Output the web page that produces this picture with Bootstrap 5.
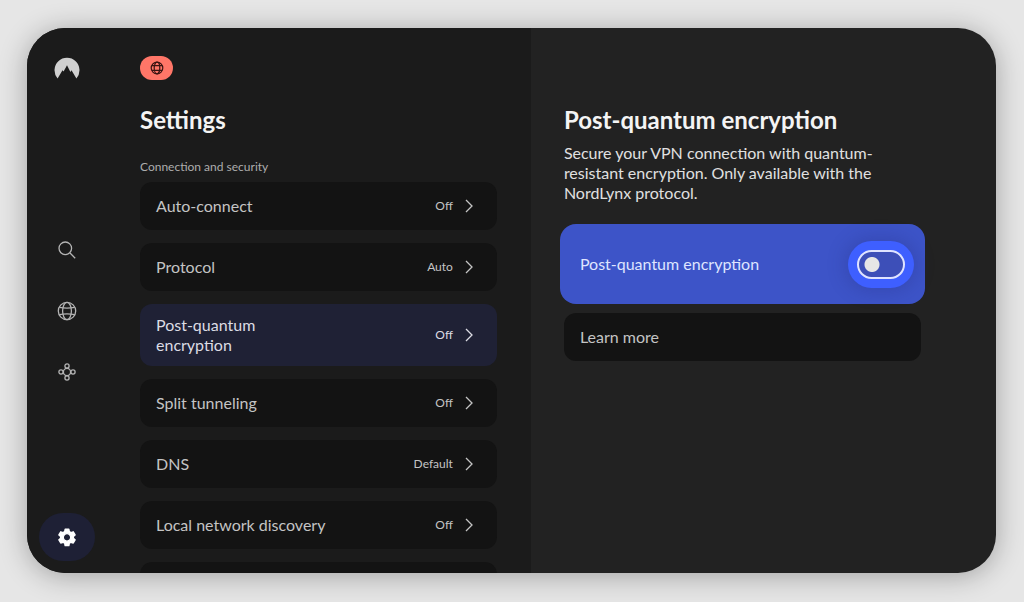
<!DOCTYPE html>
<html lang="en" data-bs-theme="dark">
<head>
<meta charset="utf-8">
<meta name="viewport" content="width=device-width, initial-scale=1">
<title>Settings</title>
<link href="https://cdn.jsdelivr.net/npm/bootstrap@5.3.0/dist/css/bootstrap.min.css" rel="stylesheet">
<style>
  body { background: #e6e6e6; font-family: Lato, sans-serif; color: #c4c4c4; font-size: 16px; line-height: 20px; }
  .stage { padding: 28px 28px 29px 27px; }
  .screen { background: #222; border-radius: 38px; box-shadow: 0 3px 28px rgba(0, 0, 0, .3); }
  .pane-left { background: #1b1b1b; flex: 0 0 52%; }
  .rail { width: 80px; flex: none; padding: 28px 0 12px; }
  .rail a { color: #b4b4b4; display: flex; align-items: center; justify-content: center; }
  .rail-links { gap: 37px; margin-top: 156px; }
  .rail-links a { height: 24px; width: 24px; }
  .rail a.rail-active { width: 56px; height: 48px; border-radius: 24px; background: #1e2035; color: #fff; }
  .settings-col { padding: 28px 34px 0 33px; min-width: 0; }
  .status-pill { width: 33px; height: 24px; border-radius: 12px; background: #ff7668; color: #3a1412; }
  .page-title { font-size: 24px; line-height: 32px; font-weight: 700; color: #f4f4f4; margin: 0; }
  .group-label { font-size: 12px; line-height: 16px; font-weight: 400; color: #adadad; margin: 23px 0 7px; }
  .tiles { gap: 13px; }
  .tile { background: #131313; color: #c4c4c4; border: 0; border-radius: 12px; padding: 0 20px 0 16px; min-height: 48px; flex: none; font-size: 16px; line-height: 20px; }
  .tile.current { background: #1f2135; color: #dcdce4; min-height: 62px; }
  .tile-name { max-width: 150px; }
  .tile-name-wide { max-width: none; }
  .tile-value { font-size: 12px; line-height: 16px; }
  .detail { padding: 76px 75px 0 33px; min-width: 0; }
  .detail-text { color: #e0e0e0; margin: 7px 0 21px; }
  .focus-tile { background: #3d54c8; color: #dfe5ff; border-radius: 16px; margin: 0 -4px 9px; min-height: 80px; padding: 0 20px; cursor: pointer; }
  .form-check-input.toggle { width: 48px; height: 29px; margin: 0; border: 2px solid #dfe3ff; border-radius: 15px; background: #3d4fb8 radial-gradient(circle at 13px 50%, #e6e6e6 7px, transparent 8px) no-repeat; box-shadow: 0 0 0 9px #3e5fff, 0 0 18px 12px rgba(35, 45, 130, .3); }
</style>
</head>
<body>
<div class="stage vh-100">
  <div class="screen d-flex h-100 overflow-hidden">
    <div class="pane-left d-flex h-100">
      <nav class="rail d-flex flex-column align-items-center" aria-label="Main">
        <a href="#" aria-label="Home"><svg width="26" height="26" viewBox="0 0 26 26"><path fill="#d0d0d0" d="M3.600 22.500A12.500 12.500 0 1 1 22.400 22.500L17.500 14.200l-1.100 1.700L13 9.200l-3.400 6.400-1.100-1.400Z"/></svg></a>
        <div class="rail-links d-flex flex-column">
          <a href="#" aria-label="Search"><svg width="20" height="20" viewBox="0 0 20 20" fill="none" stroke="currentColor" stroke-width="1.3"><circle cx="8.3" cy="8.3" r="6.3"/><path d="m13 13 5.2 5.2"/></svg></a>
          <a href="#" aria-label="Countries"><svg width="20" height="20" viewBox="0 0 20 20" fill="none" stroke="currentColor" stroke-width="1.3"><circle cx="10" cy="10" r="8.7"/><ellipse cx="10" cy="10" rx="4.4" ry="8.7"/><path d="M2.3 6.3q7.7 1.6 15.4 0M2.3 13.7q7.7-1.6 15.4 0"/></svg></a>
          <a href="#" aria-label="Meshnet"><svg width="18" height="18" viewBox="0 0 18 18" fill="none" stroke="currentColor" stroke-width="1.3"><circle cx="9" cy="9" r="3.6"/><circle cx="9" cy="3" r="2.1"/><circle cx="15" cy="9" r="2.1"/><circle cx="9" cy="15" r="2.1"/><circle cx="3" cy="9" r="2.1"/></svg></a>
        </div>
        <a class="rail-active mt-auto" href="#" aria-label="Settings" aria-current="page"><svg width="22" height="22" viewBox="0 0 24 24" fill="currentColor"><path fill-rule="evenodd" stroke="currentColor" stroke-linejoin="round" stroke-width="1.6" d="M10 3.6h4l.5 2.5 1.9 1.1 2.4-.8 2 3.4-1.9 1.7v1.9l1.9 1.7-2 3.4-2.4-.8-1.9 1.1-.5 2.5h-4l-.5-2.5-1.9-1.1-2.4.8-2-3.4 1.9-1.7v-1.9L3.2 9.8l2-3.4 2.4.8 1.9-1.1ZM12 8.3a4.1 4.1 0 1 0 0 8.2 4.1 4.1 0 0 0 0-8.2Z"/></svg></a>
      </nav>
      <main class="settings-col flex-grow-1">
        <div class="status-pill d-flex align-items-center justify-content-center mb-4"><svg width="14" height="14" viewBox="0 0 14 14" fill="none" stroke="currentColor" stroke-width="1.2"><circle cx="7" cy="7" r="5.8"/><ellipse cx="7" cy="7" rx="2.8" ry="5.8"/><path d="M1.8 4.7h10.4M1.8 9.3h10.4"/></svg></div>
        <h1 class="page-title">Settings</h1>
        <h2 class="group-label">Connection and security</h2>
        <div class="tiles d-flex flex-column">
          <button type="button" class="tile d-flex align-items-center text-start"><span class="tile-name">Auto-connect</span><span class="tile-value ms-auto me-2">Off</span><svg width="16" height="16" viewBox="0 0 16 16" fill="none" stroke="currentColor" stroke-width="1.3"><path d="m5 2 6 6-6 6"/></svg></button>
          <button type="button" class="tile d-flex align-items-center text-start"><span class="tile-name">Protocol</span><span class="tile-value ms-auto me-2">Auto</span><svg width="16" height="16" viewBox="0 0 16 16" fill="none" stroke="currentColor" stroke-width="1.3"><path d="m5 2 6 6-6 6"/></svg></button>
          <button type="button" class="tile current d-flex align-items-center text-start"><span class="tile-name">Post-quantum encryption</span><span class="tile-value ms-auto me-2">Off</span><svg width="16" height="16" viewBox="0 0 16 16" fill="none" stroke="currentColor" stroke-width="1.3"><path d="m5 2 6 6-6 6"/></svg></button>
          <button type="button" class="tile d-flex align-items-center text-start"><span class="tile-name">Split tunneling</span><span class="tile-value ms-auto me-2">Off</span><svg width="16" height="16" viewBox="0 0 16 16" fill="none" stroke="currentColor" stroke-width="1.3"><path d="m5 2 6 6-6 6"/></svg></button>
          <button type="button" class="tile d-flex align-items-center text-start"><span class="tile-name">DNS</span><span class="tile-value ms-auto me-2">Default</span><svg width="16" height="16" viewBox="0 0 16 16" fill="none" stroke="currentColor" stroke-width="1.3"><path d="m5 2 6 6-6 6"/></svg></button>
          <button type="button" class="tile d-flex align-items-center text-start"><span class="tile-name tile-name-wide">Local network discovery</span><span class="tile-value ms-auto me-2">Off</span><svg width="16" height="16" viewBox="0 0 16 16" fill="none" stroke="currentColor" stroke-width="1.3"><path d="m5 2 6 6-6 6"/></svg></button>
          <button type="button" class="tile" aria-label="More settings"></button>
        </div>
      </main>
    </div>
    <section class="detail flex-grow-1">
      <h2 class="page-title">Post-quantum encryption</h2>
      <p class="detail-text">Secure your VPN connection with quantum-resistant encryption. Only available with the NordLynx protocol.</p>
      <label class="focus-tile d-flex align-items-center justify-content-between" for="pq"><span>Post-quantum encryption</span><input class="form-check-input toggle" type="checkbox" role="switch" id="pq"></label>
      <button type="button" class="tile d-flex align-items-center w-100">Learn more</button>
    </section>
  </div>
</div>
<script src="https://cdn.jsdelivr.net/npm/bootstrap@5.3.0/dist/js/bootstrap.bundle.min.js"></script>
</body>
</html>
